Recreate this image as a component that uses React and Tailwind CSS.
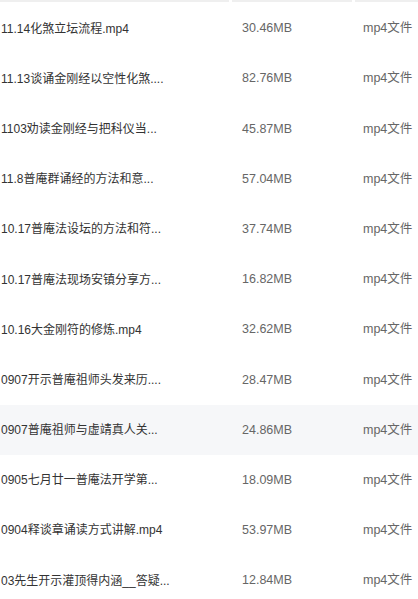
import React from "react";

const rows = [
  ["11.14化煞立坛流程.mp4", "30.46MB"],
  ["11.13谈诵金刚经以空性化煞....", "82.76MB"],
  ["1103劝读金刚经与把科仪当...", "45.87MB"],
  ["11.8普庵群诵经的方法和意...", "57.04MB"],
  ["10.17普庵法设坛的方法和符...", "37.74MB"],
  ["10.17普庵法现场安镇分享方...", "16.82MB"],
  ["10.16大金刚符的修炼.mp4", "32.62MB"],
  ["0907开示普庵祖师头发来历....", "28.47MB"],
  ["0907普庵祖师与虚靖真人关...", "24.86MB"],
  ["0905七月廿一普庵法开学第...", "18.09MB"],
  ["0904释谈章诵读方式讲解.mp4", "53.97MB"],
  ["03先生开示灌顶得内涵__答疑...", "12.84MB"],
];

export default function App() {
  return (
    <div
      className="w-[418px] h-[599px] overflow-hidden bg-white"
      style={{ fontFamily: '"Liberation Sans", "Noto Sans CJK SC", sans-serif' }}
    >
      <div className="flex h-[3px]">
        <div className="w-[229px] h-[2px] bg-[#efefef]" />
        <div className="w-[3px]" />
        <div className="w-[120px] h-[2px] bg-[#efefef]" />
        <div className="w-[3px]" />
        <div className="w-[63px] h-[2px] bg-[#efefef]" />
      </div>
      {rows.map(([name, size], i) => (
        <div
          key={i}
          className={`flex items-center h-[50.2px] pt-[1px] ${i === 8 ? "bg-[#f6f7f9]" : ""}`}
        >
          <div className="w-[242px] pl-[1px] whitespace-nowrap text-[12px] text-[#333333]">{name}</div>
          <div className="w-[121px] whitespace-nowrap text-[12.5px] text-[#666666]">{size}</div>
          <div className="whitespace-nowrap text-[12.5px] text-[#666666]">mp4文件</div>
        </div>
      ))}
    </div>
  );
}
